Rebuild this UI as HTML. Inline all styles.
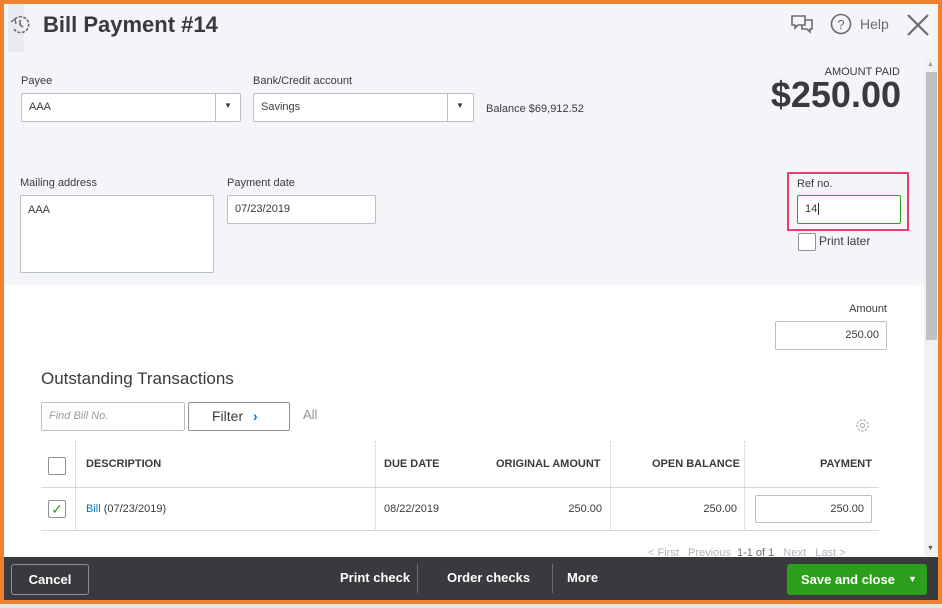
<!DOCTYPE html>
<html><head><meta charset="utf-8"><style>
*{box-sizing:border-box;margin:0;padding:0}
body{width:942px;height:608px;position:relative;overflow:hidden;background:#e8e8e8;font-family:"Liberation Sans",sans-serif;color:#393a3d}
.a{position:absolute}
.lbl{font-size:11px;color:#393a3d}
.inp{position:absolute;background:#fff;border:1px solid #babec5;border-radius:2px;font-size:11px;color:#393a3d;padding-left:7px}
.th{position:absolute;font-size:11px;font-weight:bold;top:458px;color:#393a3d}
.td{position:absolute;font-size:11px;top:503px;color:#393a3d}
.vl{position:absolute;width:0;border-left:1px dotted #c8c8c8}
</style></head><body>
<div class="a" style="left:0;top:0;width:942px;height:604px;border:4px solid #f0812e;background:#fff"></div>
<div class="a" style="left:4px;top:4px;width:934px;height:281px;background:#f4f5f8"></div>
<div class="a" style="left:8px;top:4px;width:16px;height:48px;background:#eaebee"></div>
<svg class="a" style="left:9px;top:14px" width="24" height="22" viewBox="0 0 24 22"><path d="M6 5a8 8 0 1 1-1 10" fill="none" stroke="#6b6c72" stroke-width="1.6" stroke-dasharray="3 1.5"/><path d="M11 6v5l3 2" fill="none" stroke="#6b6c72" stroke-width="1.6"/><path d="M2 8l4-3 1 5" fill="none" stroke="#6b6c72" stroke-width="1.4"/></svg>
<div class="a" style="left:43px;top:12px;font-size:22px;font-weight:bold;color:#393a3d">Bill Payment #14</div>
<svg class="a" style="left:790px;top:13px" width="26" height="24" viewBox="0 0 26 24"><path d="M2 3h13v9H8l-3 3v-3H2z" fill="none" stroke="#6b6c72" stroke-width="1.6"/><path d="M15 7h7v9h-2v3l-3-3h-5v-4" fill="none" stroke="#6b6c72" stroke-width="1.6"/></svg>
<svg class="a" style="left:830px;top:13px" width="22" height="22"><circle cx="11" cy="11" r="9.5" fill="none" stroke="#6b6c72" stroke-width="1.6"/><text x="11" y="16" text-anchor="middle" font-size="13" fill="#6b6c72" font-family="Liberation Sans">?</text></svg>
<div class="a" style="left:860px;top:16px;font-size:14px;color:#6b6c72">Help</div>
<svg class="a" style="left:906px;top:13px" width="24" height="24"><path d="M2 2L22 22M22 2L2 22" stroke="#6b6c72" stroke-width="2.2"/></svg>
<div class="a" style="left:924px;top:58px;width:14px;height:498px;background:#f1f1f1"></div>
<div class="a" style="left:926px;top:72px;width:11px;height:268px;background:#c1c1c1"></div>
<div class="a" style="left:927px;top:61px;font-size:7px;color:#999">▲</div>
<div class="a" style="left:927px;top:545px;font-size:7px;color:#555">▼</div>

<div class="a lbl" style="left:21px;top:75px">Payee</div>
<div class="inp" style="left:21px;top:93px;width:220px;height:29px;line-height:27px">AAA</div>
<div class="a" style="left:215px;top:94px;width:1px;height:27px;background:#babec5"></div>
<div class="a" style="left:224px;top:101px;font-size:8px">▼</div>
<div class="a lbl" style="left:253px;top:75px">Bank/Credit account</div>
<div class="inp" style="left:253px;top:93px;width:221px;height:29px;line-height:27px">Savings</div>
<div class="a" style="left:447px;top:94px;width:1px;height:27px;background:#babec5"></div>
<div class="a" style="left:456px;top:101px;font-size:8px">▼</div>
<div class="a lbl" style="left:486px;top:103px">Balance $69,912.52</div>
<div class="a" style="left:700px;top:66px;width:200px;text-align:right;font-size:11px;color:#393a3d">AMOUNT PAID</div>
<div class="a" style="left:700px;top:74px;width:201px;text-align:right;font-size:36px;font-weight:bold;color:#393a3d">$250.00</div>

<div class="a lbl" style="left:20px;top:177px">Mailing address</div>
<div class="inp" style="left:20px;top:195px;width:194px;height:78px;padding-top:8px">AAA</div>
<div class="a lbl" style="left:227px;top:177px">Payment date</div>
<div class="inp" style="left:227px;top:195px;width:149px;height:29px;line-height:27px">07/23/2019</div>
<div class="a" style="left:787px;top:172px;width:122px;height:59px;border:2px solid #ea3d6e"></div>
<div class="a lbl" style="left:797px;top:178px">Ref no.</div>
<div class="inp" style="left:797px;top:195px;width:104px;height:29px;line-height:27px;border-color:#2ca01c">14<span style="border-left:1px solid #333;margin-left:1px"></span></div>
<div class="a" style="left:798px;top:233px;width:18px;height:18px;border:1px solid #8d9096;background:#fff;border-radius:2px"></div>
<div class="a" style="left:819px;top:234px;font-size:12px">Print later</div>

<div class="a lbl" style="left:787px;top:303px;width:100px;text-align:right">Amount</div>
<div class="inp" style="left:775px;top:321px;width:112px;height:29px;line-height:27px;text-align:right;padding-right:7px">250.00</div>

<div class="a" style="left:41px;top:369px;font-size:17px;color:#393a3d">Outstanding Transactions</div>
<div class="inp" style="left:41px;top:402px;width:144px;height:29px;line-height:27px;font-style:italic;color:#9a9ca0">Find Bill No.</div>
<div class="a" style="left:188px;top:402px;width:102px;height:29px;border:1px solid #8d9096;border-radius:2px;background:#fff;font-size:14px;line-height:27px;padding-left:23px">Filter <span style="color:#0077c5;font-weight:bold;margin-left:6px">›</span></div>
<div class="a" style="left:303px;top:407px;font-size:13px;color:#8d9096">All</div>
<svg class="a" style="left:854px;top:417px" width="17" height="17" viewBox="0 0 17 17"><circle cx="8.5" cy="8.5" r="5.5" fill="none" stroke="#b0b2b6" stroke-width="1.3" stroke-dasharray="2.5 1.3"/><circle cx="8.5" cy="8.5" r="2.2" fill="none" stroke="#b0b2b6" stroke-width="1.2"/></svg>

<div class="vl" style="left:75px;top:441px;height:90px"></div>
<div class="vl" style="left:375px;top:441px;height:90px"></div>
<div class="vl" style="left:610px;top:441px;height:90px"></div>
<div class="vl" style="left:744px;top:441px;height:90px"></div>
<div class="a" style="left:41px;top:487px;width:838px;height:1px;background:#d4d7dc"></div>
<div class="a" style="left:41px;top:530px;width:838px;height:1px;background:#d4d7dc"></div>
<div class="a" style="left:48px;top:457px;width:18px;height:18px;border:1px solid #8d9096;background:#fff;border-radius:2px"></div>
<div class="th" style="left:86px">DESCRIPTION</div>
<div class="th" style="left:384px">DUE DATE</div>
<div class="th" style="left:496px">ORIGINAL AMOUNT</div>
<div class="th" style="left:652px">OPEN BALANCE</div>
<div class="th" style="left:820px">PAYMENT</div>
<div class="a" style="left:48px;top:500px;width:18px;height:18px;border:1px solid #8d9096;background:#fff;border-radius:2px;color:#2ca01c;font-size:14px;line-height:16px;text-align:center">✓</div>
<div class="td" style="left:86px"><span style="color:#0077c5">Bill</span> (07/23/2019)</div>
<div class="td" style="left:384px">08/22/2019</div>
<div class="td" style="left:540px;width:62px;text-align:right">250.00</div>
<div class="td" style="left:676px;width:61px;text-align:right">250.00</div>
<div class="inp" style="left:755px;top:495px;width:117px;height:28px;line-height:26px;text-align:right;padding-right:7px">250.00</div>
<div class="a" style="left:648px;top:547px;font-size:11px;color:#b0b2b6">&lt; First &nbsp; Previous &nbsp;<span style="color:#6b6c72">1-1 of 1</span> &nbsp; Next &nbsp; Last &gt;</div>

<div class="a" style="left:4px;top:557px;width:934px;height:43px;background:#393a3d"></div>
<div class="a" style="left:11px;top:564px;width:78px;height:31px;border:1px solid #8d9096;border-radius:3px;color:#fff;font-size:13px;font-weight:bold;text-align:center;line-height:29px">Cancel</div>
<div class="a" style="left:340px;top:570px;color:#fff;font-size:13px;font-weight:bold">Print check</div>
<div class="a" style="left:417px;top:564px;width:1px;height:29px;background:#6b6c72"></div>
<div class="a" style="left:447px;top:570px;color:#fff;font-size:13px;font-weight:bold">Order checks</div>
<div class="a" style="left:552px;top:564px;width:1px;height:29px;background:#6b6c72"></div>
<div class="a" style="left:567px;top:570px;color:#fff;font-size:13px;font-weight:bold">More</div>
<div class="a" style="left:787px;top:564px;width:140px;height:31px;background:#2ca01c;border-radius:3px;color:#fff;font-size:13px;font-weight:bold;line-height:31px;padding-left:14px">Save and close<span style="position:absolute;left:121px;font-size:9px">▼</span></div>
</body></html>
